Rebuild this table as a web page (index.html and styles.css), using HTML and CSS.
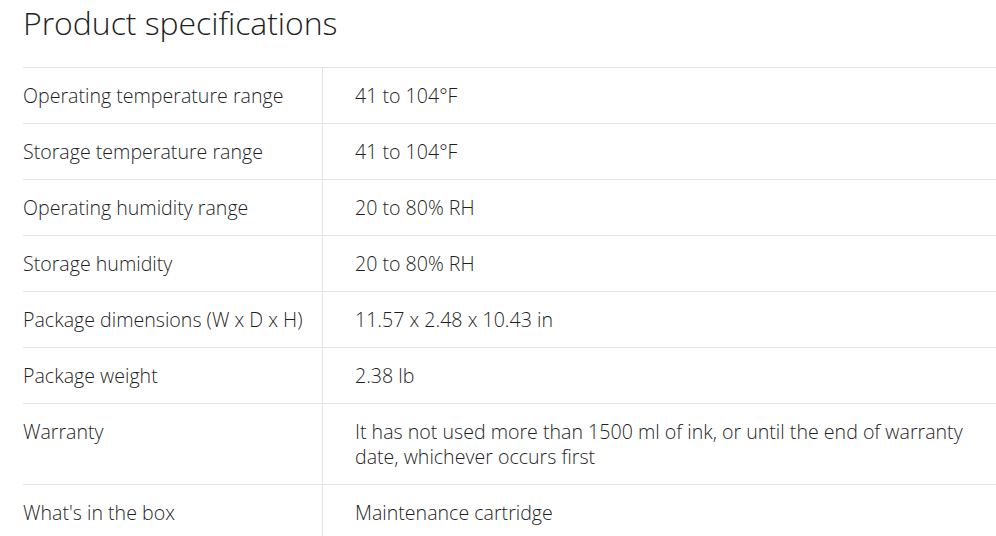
FILE: index.html
```html
<!DOCTYPE html>
<html lang="en">
<head>
<meta charset="utf-8">
<title>Product specifications</title>
<link rel="stylesheet" href="styles.css">
</head>
<body>
<section class="specs">
  <h2 class="specs-title">Product specifications</h2>
  <div class="specs-table">
    <div class="row"><div class="label">Operating temperature range</div><div class="value">41 to 104°F</div></div>
    <div class="row"><div class="label">Storage temperature range</div><div class="value">41 to 104°F</div></div>
    <div class="row"><div class="label">Operating humidity range</div><div class="value">20 to 80% RH</div></div>
    <div class="row"><div class="label">Storage humidity</div><div class="value">20 to 80% RH</div></div>
    <div class="row"><div class="label">Package dimensions (W x D x H)</div><div class="value">11.57 x 2.48 x 10.43 in</div></div>
    <div class="row"><div class="label">Package weight</div><div class="value">2.38 lb</div></div>
    <div class="row"><div class="label">Warranty</div><div class="value">It has not used more than 1500 ml of ink, or until the end of warranty date, whichever occurs first</div></div>
    <div class="row"><div class="label">What's in the box</div><div class="value">Maintenance cartridge</div></div>
  </div>
</section>
</body>
</html>
```
FILE: styles.css
```css
html, body {
  margin: 0;
  padding: 0;
  background: #ffffff;
}
body {
  font-family: "Open Sans", "Liberation Sans", sans-serif;
  font-weight: 300;
  color: #1f1f1f;
  overflow: hidden;
}
.specs {
  padding: 0 0 0 23px;
}
.specs-title {
  margin: 0;
  font-size: 32px;
  font-weight: 300;
  line-height: 46px;
  height: 67px;
  letter-spacing: -0.05px;
}
.specs-table {
  border-top: 1px solid #e3e3e3;
  width: 1000px;
}
.row {
  display: grid;
  grid-template-columns: 300px 1fr;
  border-bottom: 1px solid #e3e3e3;
}
.label, .value {
  font-size: 19.6px;
  line-height: 25px;
  padding: 15px 0;
}
.label {
  border-right: 1px solid #e3e3e3;
}
.value {
  padding-left: 32px;
  padding-right: 20px;
}
```
